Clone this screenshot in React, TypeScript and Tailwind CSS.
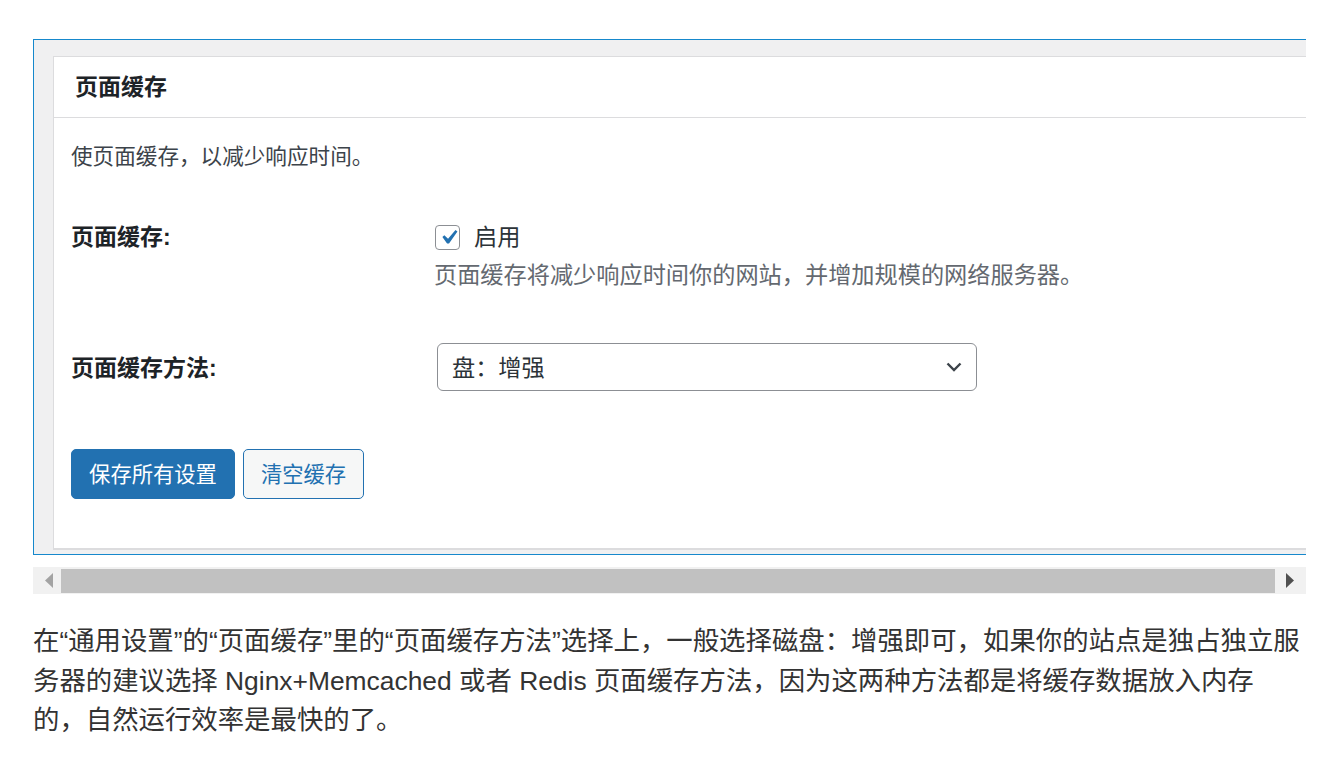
import React from "react";

const FONT = { fontFamily: '"Liberation Sans", "Noto Sans CJK SC", sans-serif' };

function Checkbox() {
  return (
    <span className="relative inline-block w-[25px] h-[25px] rounded-[4px] border border-[#8c8f94] bg-white shrink-0">
      <svg viewBox="0 0 20 20" className="absolute -left-[2px] -top-[3px] w-[29px] h-[29px]">
        <path d="M14.83 4.89l1.34.94-5.81 8.38H9.02L5.78 9.67l1.34-1.25 2.57 2.4z" fill="#2271b1" />
      </svg>
    </span>
  );
}

export default function App() {
  return (
    <div className="bg-white min-h-[772px] w-[1332px] pt-[39px]" style={FONT}>
      <div className="ml-[33px] w-[1273px]">
        {/* framed screenshot: blue edge on top, left and bottom */}
        <div className="bg-[#1688cc] pt-[1px] pl-[1px] pb-[1px] overflow-hidden">
          <div className="bg-[#f0f0f1] pl-[19px] pt-[16px] pb-[4px]">
            <div className="bg-[#dcdcde] pt-[1px] pl-[1px] pb-[2px]">
              <div className="bg-white">
                <div className="h-[60px] flex items-center pl-[21px]">
                  <span className="text-[23px] font-bold text-[#1d2327] leading-[30px]">页面缓存</span>
                </div>
                <div className="h-[1px] bg-[#dcdcde]" />
                <div className="pl-[17px] pt-[24px] pb-[49px]">
                  <p className="text-[21.6px] leading-[30px] text-[#3c434a]">使页面缓存，以减少响应时间。</p>

                  <div className="flex mt-[50px]">
                    <div className="w-[363px] text-[23px] font-bold text-[#1d2327] leading-[30px]">页面缓存:</div>
                    <div className="flex flex-col">
                      <label className="flex items-center h-[30px] pl-[1px]">
                        <Checkbox />
                        <span className="ml-[14px] text-[23.2px] text-[#2c3338] leading-[30px]">启用</span>
                      </label>
                      <p className="text-[23.2px] leading-[30px] text-[#646970] mt-[8px]">
                        页面缓存将减少响应时间你的网站，并增加规模的网络服务器。
                      </p>
                    </div>
                  </div>

                  <div className="flex items-center mt-[53px]">
                    <div className="w-[363px] text-[23px] font-bold text-[#1d2327] leading-[30px] pt-[2px]">页面缓存方法:</div>
                    <div className="ml-[3px] w-[540px] h-[48px] rounded-[6px] border border-[#8c8f94] bg-white flex items-center justify-between pl-[14px] pr-[14px]">
                      <span className="text-[23.2px] text-[#2c3338] leading-[30px] pt-[2px]">盘：增强</span>
                      <svg viewBox="0 0 16 10" className="w-[16px] h-[10px]">
                        <polyline points="1.5,1.5 8,8 14.5,1.5" fill="none" stroke="#3c434a" strokeWidth="2.4" />
                      </svg>
                    </div>
                  </div>

                  <div className="flex gap-[8px] mt-[58px]">
                    <button className="w-[164px] h-[50px] rounded-[5px] bg-[#2271b1] border border-[#2271b1] text-white text-[21.3px] leading-[30px] pt-[2px]">
                      保存所有设置
                    </button>
                    <button className="w-[121px] h-[50px] rounded-[5px] bg-[#f6f7f7] border border-[#2271b1] text-[#2271b1] text-[21.3px] leading-[30px] pt-[2px]">
                      清空缓存
                    </button>
                  </div>
                </div>
              </div>
            </div>
          </div>
        </div>

        {/* horizontal scrollbar */}
        <div className="mt-[12px] h-[27px] bg-[#f1f1f1] flex items-center">
          <div className="w-[28px] h-full flex items-center justify-center">
            <svg viewBox="0 0 8 15" className="w-[8px] h-[15px] ml-[3px]">
              <polygon points="8,0 0,7.5 8,15" fill="#a3a3a3" />
            </svg>
          </div>
          <div className="w-[1214px] h-[24px] bg-[#c1c1c1]" />
          <div className="flex-1 h-full flex items-center justify-center">
            <svg viewBox="0 0 8 15" className="w-[8px] h-[15px] mr-[2px]">
              <polygon points="0,0 8,7.5 0,15" fill="#505050" />
            </svg>
          </div>
        </div>

        {/* article text */}
        <p className="mt-[28px] text-[26.4px] leading-[39.5px] text-[#333333] whitespace-nowrap">
          在“通用设置”的“页面缓存”里的“页面缓存方法”选择上，一般选择磁盘：增强即可，如果你的站点是独占独立服
          <br />
          务器的建议选择 Nginx+Memcached 或者 Redis 页面缓存方法，因为这两种方法都是将缓存数据放入内存
          <br />
          的，自然运行效率是最快的了。
        </p>
      </div>
    </div>
  );
}
